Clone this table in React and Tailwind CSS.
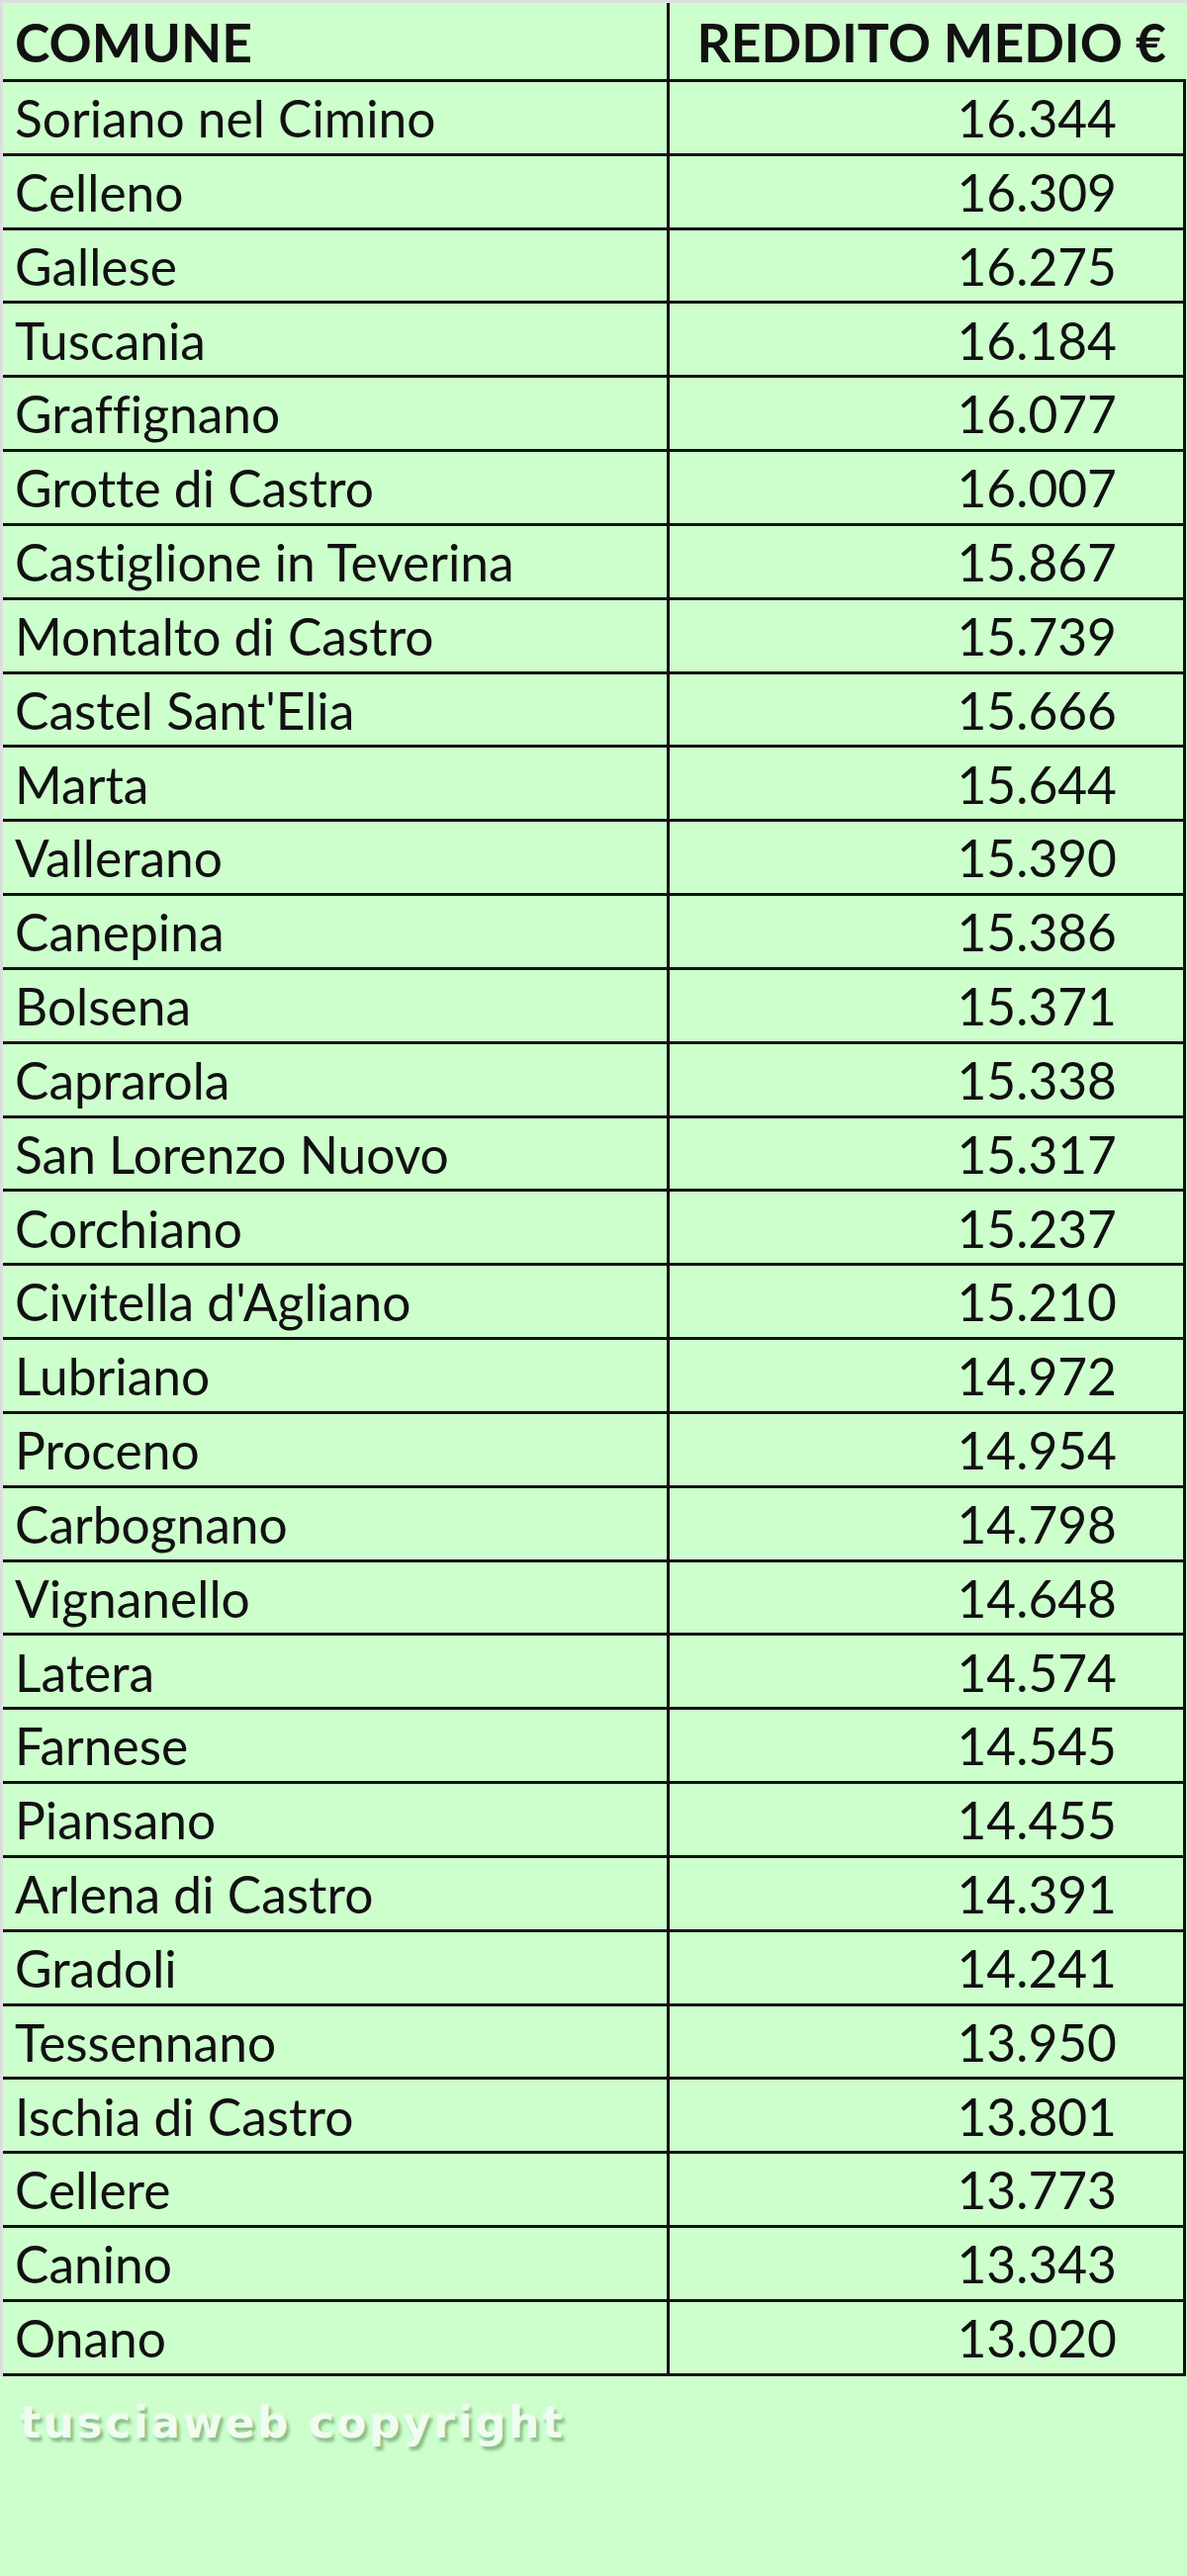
import React from "react";

// dati: reddito medio per comune
const rows = [
  ["Soriano nel Cimino", "16.344"],
  ["Celleno", "16.309"],
  ["Gallese", "16.275"],
  ["Tuscania", "16.184"],
  ["Graffignano", "16.077"],
  ["Grotte di Castro", "16.007"],
  ["Castiglione in Teverina", "15.867"],
  ["Montalto di Castro", "15.739"],
  ["Castel Sant'Elia", "15.666"],
  ["Marta", "15.644"],
  ["Vallerano", "15.390"],
  ["Canepina", "15.386"],
  ["Bolsena", "15.371"],
  ["Caprarola", "15.338"],
  ["San Lorenzo Nuovo", "15.317"],
  ["Corchiano", "15.237"],
  ["Civitella d'Agliano", "15.210"],
  ["Lubriano", "14.972"],
  ["Proceno", "14.954"],
  ["Carbognano", "14.798"],
  ["Vignanello", "14.648"],
  ["Latera", "14.574"],
  ["Farnese", "14.545"],
  ["Piansano", "14.455"],
  ["Arlena di Castro", "14.391"],
  ["Gradoli", "14.241"],
  ["Tessennano", "13.950"],
  ["Ischia di Castro", "13.801"],
  ["Cellere", "13.773"],
  ["Canino", "13.343"],
  ["Onano", "13.020"],
];

const Row = ({ name, value }) => (
  <div className="flex h-[74.84px] border-b-[3px] border-[#111]">
    <div className="w-[674px] shrink-0 border-r-[3px] border-[#111] flex items-center pl-[12px] pt-[2px]">
      {name}
    </div>
    <div className="flex-1 border-r-[3px] border-[#111] flex items-center justify-end pr-[67px] pt-[2px]">
      {value}
    </div>
  </div>
);

const App = () => {
  return (
    <div className="w-[1200px] min-h-[2605px] bg-[#ccffcc] border-t-[3px] border-[#dddddd]">
      {/* tabella */}
      <div
        className="w-[1199px] border-l-[3px] border-[#dddddd] text-[#111] text-[51.5px] leading-none [font-variant-ligatures:none]"
        style={{ fontFamily: "Lato, 'Open Sans', sans-serif" }}
      >
        <div className="flex h-[80px] border-b-[3px] border-[#111] font-bold text-[53.5px]">
          <div className="w-[674px] shrink-0 border-r-[3px] border-[#111] flex items-center pl-[12px] pt-[2px]">
            COMUNE
          </div>
          <div className="flex-1 flex items-center justify-end pr-[20px] pt-[2px]">
            REDDITO MEDIO €
          </div>
        </div>
        {rows.map(([name, value]) => (
          <Row key={name} name={name} value={value} />
        ))}
      </div>

      {/* watermark */}
      <div
        className="pl-[20px] pt-[25px] text-[44px] font-bold leading-none tracking-[2.5px] text-[#effcef]"
        style={{
          fontFamily: "'DejaVu Sans', Verdana, sans-serif",
          textShadow: "3px 4px 3px rgba(60,110,60,0.45)",
        }}
      >
        tusciaweb copyright
      </div>
    </div>
  );
};

export default App;
